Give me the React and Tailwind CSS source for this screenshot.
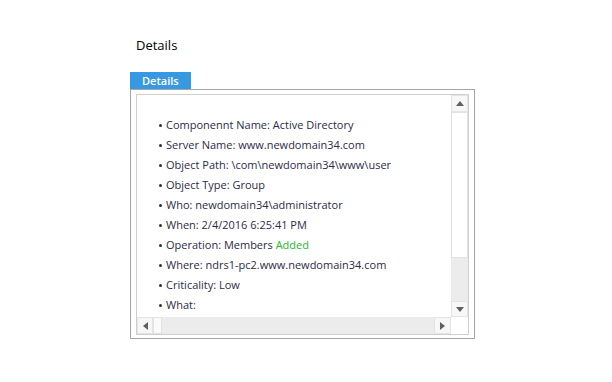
import React from "react";

const items = [
	["Componennt Name: Active Directory"],
	["Server Name: www.newdomain34.com"],
	["Object Path: \\com\\newdomain34\\www\\user"],
	["Object Type: Group"],
	["Who: newdomain34\\administrator"],
	["When: 2/4/2016 6:25:41 PM"],
	["Operation: Members ", "Added"],
	["Where: ndrs1-pc2.www.newdomain34.com"],
	["Criticality: Low"],
	["What:"],
	[""],
];

const Arrow = ({ dir }) => {
	const pts = {
		up: "0,5 4,0 8,5",
		down: "0,0 8,0 4,5",
		left: "5,0 5,8 0,4",
		right: "0,0 0,8 5,4",
	};
	const vertical = dir === "up" || dir === "down";
	return (
		<svg width={vertical ? 8 : 5} height={vertical ? 5 : 8}>
			<polygon points={pts[dir]} fill="#606060" />
		</svg>
	);
};

const App = () => {
	return (
		<div
			className="w-[612px] h-[382px] bg-white relative overflow-hidden"
			style={{ fontFamily: '"Open Sans", "Liberation Sans", sans-serif' }}>
			<div className="pl-[136px] pt-[36px] text-[13px] leading-[18px] text-black">
				Details
			</div>
			<div className="pl-[130px] pt-[18px]">
				<div className="w-[61px] h-[17px] bg-[#3799e2] text-white text-[11px] font-semibold leading-[17px] pl-[12px]">
					Details
				</div>
				<div className="w-[345px] h-[250px] border border-[#a5a5a5] pt-[4px] pl-[5px] pr-[5px] pb-[3px]">
					<div className="w-full h-full border border-[#cfcfcf] grid grid-cols-[1fr_17px] grid-rows-[1fr_17px]">
						<div className="overflow-hidden pt-[20px] pl-[22px] text-[11px] text-[#2c2b45]">
							{items.map((it, i) => (
								<div key={i} className="flex items-center h-[20px] whitespace-nowrap">
									<span className="w-[3px] h-[3px] rounded-full bg-[#2c2b45] mr-[4px]" />
									<span>
										{it[0]}
										{it[1] ? <span className="text-[#2ab42a]">{it[1]}</span> : null}
									</span>
								</div>
							))}
						</div>
						<div className="flex flex-col bg-[#ececec]">
							<div className="h-[17px] bg-[#f7f7f7] border border-[#e4e4e4] flex items-center justify-center">
								<Arrow dir="up" />
							</div>
							<div className="h-[146px] bg-white border border-[#e2e2e2]" />
							<div className="flex-1" />
							<div className="h-[16px] bg-[#f7f7f7] border border-[#e4e4e4] flex items-center justify-center">
								<Arrow dir="down" />
							</div>
						</div>
						<div className="flex bg-[#ececec]">
							<div className="w-[16px] bg-[#f7f7f7] border border-[#e4e4e4] flex items-center justify-center">
								<Arrow dir="left" />
							</div>
							<div className="w-[9px] bg-[#fafafa] border border-[#e2e2e2]" />
							<div className="flex-1" />
							<div className="w-[17px] bg-[#f7f7f7] border border-[#e4e4e4] flex items-center justify-center">
								<Arrow dir="right" />
							</div>
						</div>
						<div className="bg-white" />
					</div>
				</div>
			</div>
		</div>
	);
};

export default App;
